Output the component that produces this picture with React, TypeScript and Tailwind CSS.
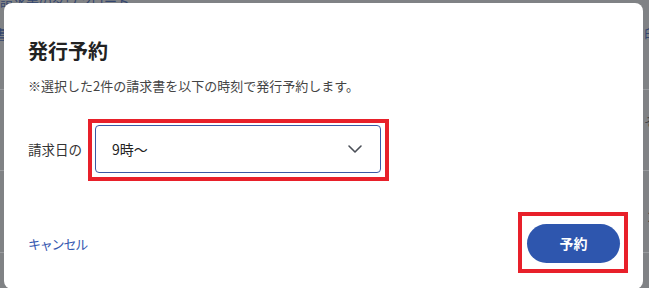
import React from "react";

const FONT = { fontFamily: '"Noto Sans CJK JP", "Noto Sans", sans-serif' };

function ChevronDown() {
  return (
    <svg width="18" height="18" viewBox="0 0 18 18" fill="none" className="text-[#4a4f57]">
      <path d="M3 6l6 6 6-6" stroke="currentColor" strokeWidth="1.6" strokeLinecap="round" strokeLinejoin="round" />
    </svg>
  );
}

function BackgroundPage() {
  // faded list page sitting behind the dialog overlay
  return (
    <div className="w-full h-full bg-[#808285] text-[13px]">
      <div className="h-[14px] -mt-[6px] pl-0 text-[#34466e] whitespace-nowrap leading-[14px]">請求書のダウンロード</div>
      <div className="h-[82px] border-b border-[#999b9e] flex justify-between items-start pt-[16px] text-[#34466e]">
        <span className="-ml-[6px]">書</span>
        <span className="-mr-[8px]">印</span>
      </div>
      <div className="h-[81px] border-b border-[#999b9e] flex justify-end pt-[22px] text-[#3a3c40]">
        <span className="-mr-[8px]">そ</span>
      </div>
      <div className="h-[82px] border-b border-[#999b9e] flex justify-end pt-[36px] text-[#3a3c40]">
        <span className="-mr-[6px]">2</span>
      </div>
    </div>
  );
}

export default function App() {
  return (
    <div className="relative w-[649px] h-[294px] overflow-hidden" style={FONT}>
      <BackgroundPage />

      {/* dialog */}
      <div className="absolute inset-0 pt-[3px] pl-[4px]">
        <div className="w-[639px] h-[286px] bg-white rounded-[8px] pt-[34px] pl-[24px] pr-[23px] flex flex-col">
          <h2 className="text-[20px] leading-[28px] font-bold text-[#222]">発行予約</h2>
          <p className="mt-[11px] text-[13px] leading-[20px] text-[#444]">※選択した2件の請求書を以下の時刻で発行予約します。</p>

          <div className="mt-[29px] flex items-center gap-[13px]">
            <span className="text-[13.5px] text-[#333]">請求日の</span>
            <div className="relative">
              <button className="w-[286px] h-[48px] border border-[#3a59a6] rounded-[4px] flex items-center justify-between pl-[16px] pr-[16px] text-[14px] text-[#222]">
                <span>9時〜</span>
                <ChevronDown />
              </button>
              <div className="absolute -left-[7px] -top-[6px] -right-[8px] -bottom-[8px] border-4 border-[#e8202a] pointer-events-none" />
            </div>
          </div>

          <div className="mt-[51px] flex items-center justify-between">
            <button className="text-[13px] tracking-[-1.2px] text-[#3558b0]">キャンセル</button>
            <div className="relative">
              <button className="w-[93px] h-[39px] rounded-full bg-[#2e56ae] text-white text-[14px] font-bold">予約</button>
              <div className="absolute -left-[9px] -top-[12px] -right-[8px] -bottom-[10px] border-4 border-[#e8202a] pointer-events-none" />
            </div>
          </div>
        </div>
      </div>
    </div>
  );
}
